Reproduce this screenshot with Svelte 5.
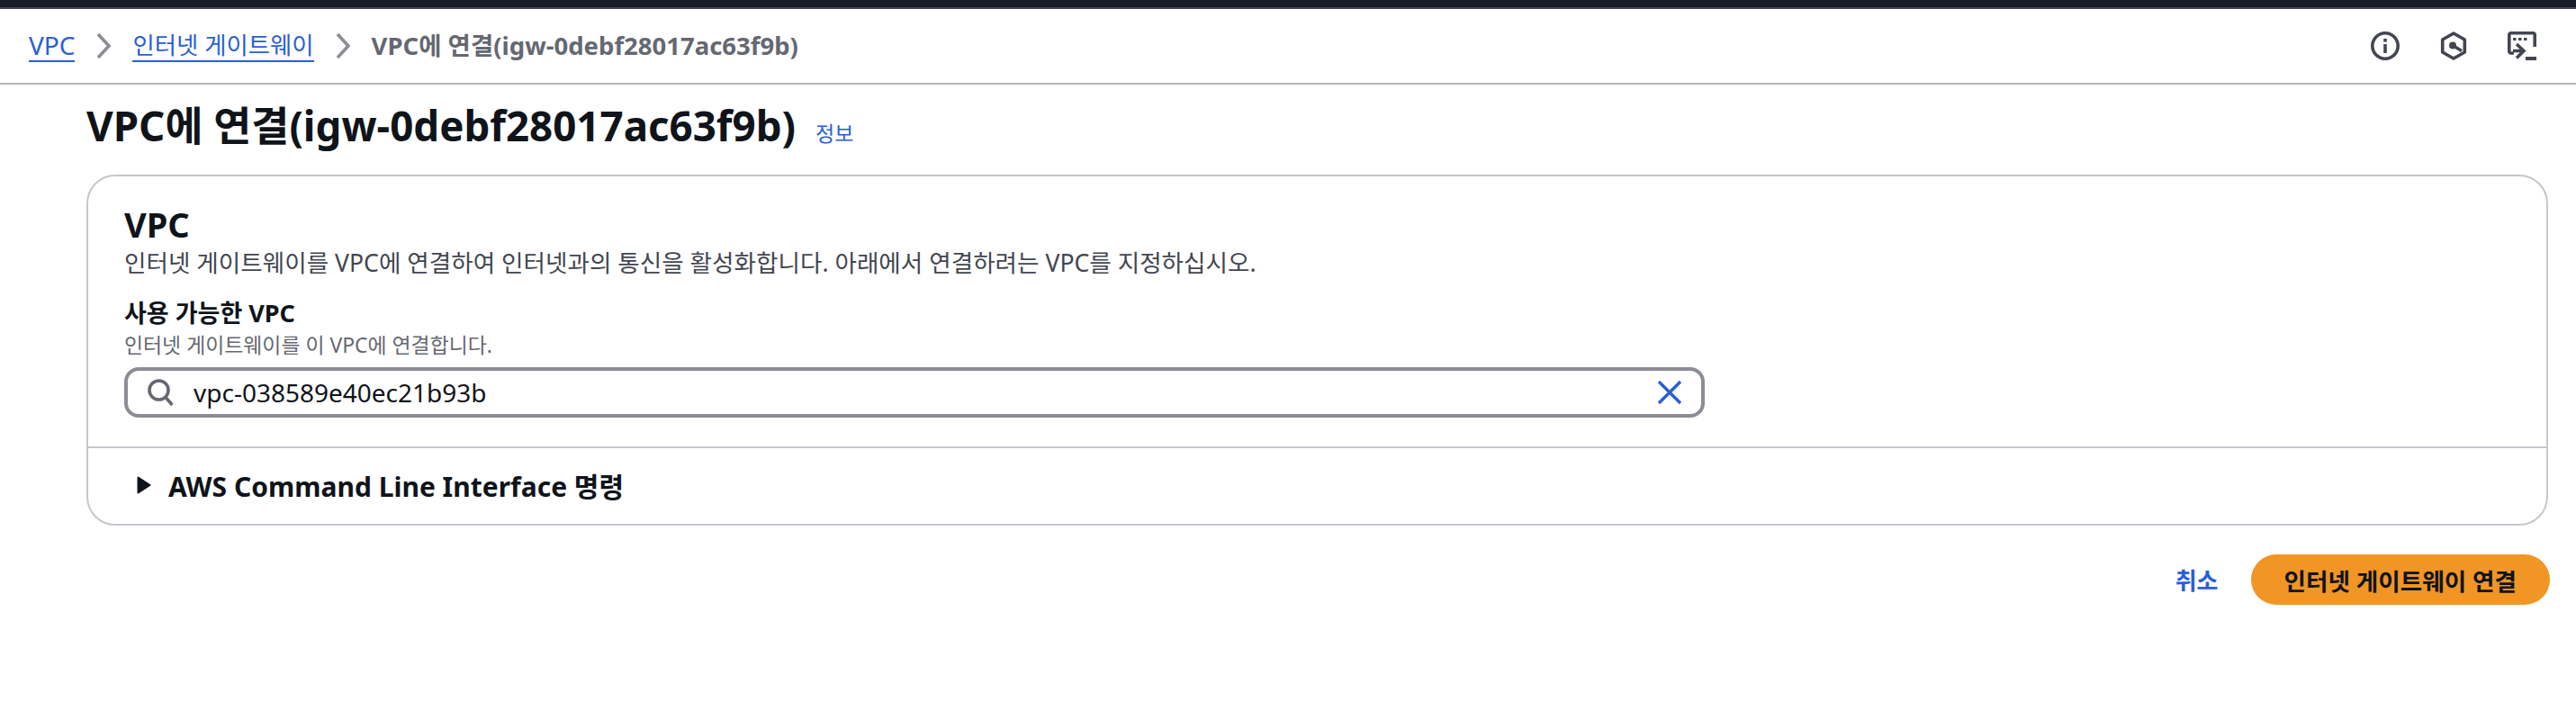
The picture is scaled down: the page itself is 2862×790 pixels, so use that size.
<script>
  const crumbs = [
    { text: "VPC", kind: "" },
    { text: "인터넷 게이트웨이", kind: "ko" }
  ];
  const current = "VPC에 연결(igw-0debf28017ac63f9b)";
</script>

<div class="topbar"></div>

<nav class="crumbbar">
  <div class="crumbs">
    {#each crumbs as crumb}
      <span class="link {crumb.kind}">{crumb.text}</span>
      <svg class="chev" viewBox="0 0 16 32" width="16" height="32">
        <path d="M2 3l12 13L2 29" fill="none" stroke="#8c8c94" stroke-width="3.6" />
      </svg>
    {/each}
    <span class="current">{current}</span>
  </div>
  <div class="tools">
    <svg viewBox="0 0 32 32" width="32" height="32">
      <circle cx="16" cy="16" r="14.2" fill="none" stroke="#424650" stroke-width="3.6" />
      <rect x="14.200" y="14" width="3.600" height="10" fill="#424650" />
      <rect x="14.200" y="8" width="3.600" height="3.600" fill="#424650" />
    </svg>
    <svg viewBox="0 0 32 32" width="32" height="32">
      <path d="M16 2l12.300 7v14L16 30 3.700 23V9z" fill="none" stroke="#424650" stroke-width="3.600" stroke-linejoin="round" />
      <circle cx="15" cy="15.500" r="4" fill="#424650" />
      <path d="M15 15.500l10 6" stroke="#424650" stroke-width="3.600" />
    </svg>
    <svg viewBox="0 0 32 32" width="32" height="32">
      <path d="M7 24H3.500A1.700 1.700 0 0 1 1.800 22.300V3.500A1.700 1.700 0 0 1 3.500 1.800h25A1.700 1.700 0 0 1 30.200 3.500V17" fill="none" stroke="#424650" stroke-width="3.600" />
      <path d="M6 7h3.500v3H6zM12 7h3.500v3H12zM18 7h3.500v3H18z" fill="#424650" />
      <path d="M10 14l8 7.500-8 8M17 21.500H6" fill="none" stroke="#424650" stroke-width="3.600" />
      <rect x="20" y="28" width="12" height="4" fill="#424650" />
    </svg>
  </div>
</nav>

<main>
  <div class="heading">
    <h1>{current}</h1>
    <span class="info">정보</span>
  </div>

  <section class="card">
    <div class="body">
      <h2>VPC</h2>
      <p class="desc">인터넷 게이트웨이를 VPC에 연결하여 인터넷과의 통신을 활성화합니다. 아래에서 연결하려는 VPC를 지정하십시오.</p>
      <div class="label">사용 가능한 VPC</div>
      <div class="hint">인터넷 게이트웨이를 이 VPC에 연결합니다.</div>
      <div class="search">
        <svg viewBox="0 0 28 30" width="28" height="30">
          <circle cx="12.500" cy="12.500" r="10.500" fill="none" stroke="#656871" stroke-width="3.600" />
          <path d="M19.500 20l8 9" stroke="#656871" stroke-width="3.600" />
        </svg>
        <span class="value">vpc-038589e40ec21b93b</span>
        <svg class="clear" viewBox="0 0 26 26" width="26" height="26">
          <path d="M1 1l24 24M25 1L1 25" stroke="#295ed8" stroke-width="3.400" />
        </svg>
      </div>
    </div>
    <div class="cli">
      <svg viewBox="0 0 16 20" width="16" height="20"><path d="M1.500 1.500v17L14.500 10z" fill="#0f141a" stroke="#0f141a" stroke-width="2" stroke-linejoin="round" /></svg>
      <span>AWS Command Line Interface 명령</span>
    </div>
  </section>

  <div class="actions">
    <span class="cancel">취소</span>
    <button>인터넷 게이트웨이 연결</button>
  </div>
</main>

<style>
  :global(body) {
    background: #fff;
    color: #0f141a;
    font-family: "Noto Sans", "Noto Sans CJK KR", sans-serif;
  }

  .topbar {
    height: 8px;
    background: #161d26;
    border-bottom: 2px solid #424650;
  }

  .crumbbar {
    height: 84px;
    box-sizing: border-box;
    border-bottom: 2px solid #b4b4bb;
    padding: 0 44px 0 32px;
    display: flex;
    align-items: center;
    justify-content: space-between;
  }

  .crumbs {
    display: flex;
    align-items: center;
    font-size: 28px;
    line-height: 40px;
  }

  .link {
    color: #295ed8;
    border-bottom: 2px solid #295ed8;
    line-height: 34px;
  }

  .link.ko {
    font-size: 26.4px;
  }

  .chev {
    margin: 0 24px;
  }

  .current {
    color: #656871;
    font-weight: 700;
    font-size: 27.5px;
  }

  .tools {
    display: flex;
    gap: 44px;
  }

  main {
    padding: 0 31px 0 96px;
  }

  .heading {
    display: flex;
    align-items: baseline;
    gap: 22px;
    height: 100px;
    box-sizing: border-box;
    padding-top: 15px;
  }

  h1 {
    margin: 0;
    font-size: 45.7px;
    line-height: 60px;
    font-weight: 700;
  }

  .info {
    color: #295ed8;
    font-size: 23px;
  }

  .card {
    border: 2px solid #c6c6cd;
    border-radius: 32px;
  }

  .body {
    padding: 30px 40px 32px;
    border-bottom: 2px solid #c6c6cd;
  }

  h2 {
    margin: 0;
    font-size: 38px;
    line-height: 46px;
    font-weight: 700;
  }

  .desc {
    margin: 0 0 16px;
    font-size: 26.6px;
    line-height: 40px;
    color: #424650;
  }

  .label {
    font-size: 27px;
    line-height: 40px;
    font-weight: 700;
  }

  .hint {
    font-size: 22.9px;
    line-height: 32px;
    color: #656871;
    margin-bottom: 8px;
  }

  .search {
    width: 1756px;
    height: 56px;
    box-sizing: border-box;
    border: 4px solid #8c8c94;
    border-radius: 16px;
    display: flex;
    align-items: center;
    padding: 0 22px;
    gap: 23px;
  }

  .value {
    flex: 1;
    font-size: 28px;
  }

  .cli {
    height: 84px;
    box-sizing: border-box;
    padding: 0 0 2px 54px;
    display: flex;
    align-items: center;
    gap: 19px;
    font-size: 30px;
    font-weight: 700;
  }

  .actions {
    display: flex;
    justify-content: flex-end;
    align-items: center;
    gap: 36px;
    margin: 32px -2px 0 0;
  }

  .cancel {
    color: #295ed8;
    font-size: 26px;
    font-weight: 700;
  }

  button {
    height: 56px;
    padding: 0 37px;
    border: none;
    border-radius: 28px;
    background: #f19525;
    color: #0f141a;
    font: 700 26.6px "Noto Sans", "Noto Sans CJK KR", sans-serif;
  }
</style>
